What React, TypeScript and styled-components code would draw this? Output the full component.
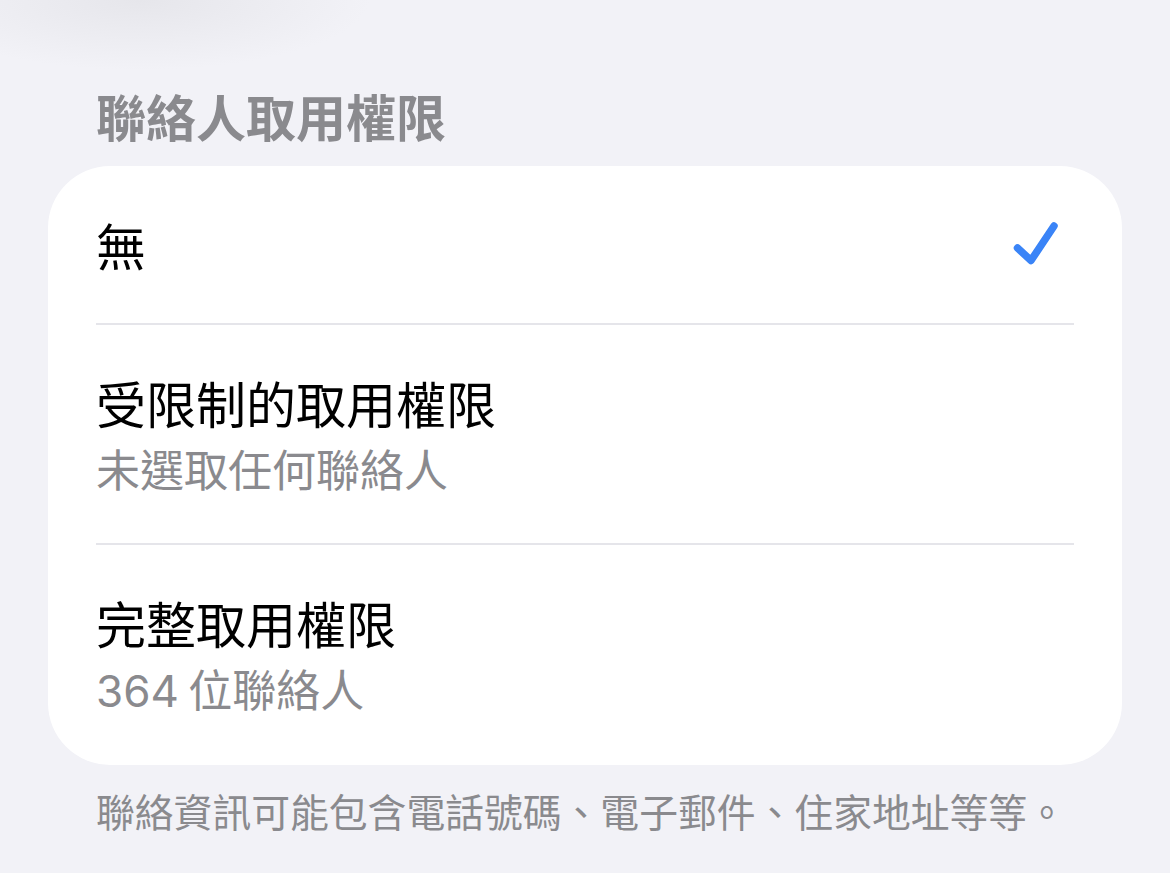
import React from "react";
import styled, { createGlobalStyle } from "styled-components";

const GlobalStyle = createGlobalStyle`
  html, body {
    margin: 0;
    padding: 0;
  }
  body {
    background-color: #f2f2f7;
    background-image: radial-gradient(ellipse 230px 70px at 140px 0px, #e6e6eb 0%, rgba(242, 242, 247, 0) 100%);
    background-repeat: no-repeat;
    font-family: "Noto Sans CJK TC", "Noto Sans", sans-serif;
    -webkit-font-smoothing: antialiased;
  }
`;

type Option = {
  title: string;
  subtitle?: string;
  selected?: boolean;
};

const options: Option[] = [
  { title: "無", selected: true },
  { title: "受限制的取用權限", subtitle: "未選取任何聯絡人" },
  { title: "完整取用權限", subtitle: "364 位聯絡人" },
];

const CheckIcon = () => (
  <Check viewBox="0 0 48 48" aria-hidden>
    <path
      d="M5.5 28 L19 40.5 L42 6"
      fill="none"
      stroke="#3a84f7"
      strokeWidth="7.5"
      strokeLinecap="round"
      strokeLinejoin="round"
    />
  </Check>
);

const App = () => {
  return (
    <>
      <GlobalStyle />
      <Page>
        <SectionHeader>聯絡人取用權限</SectionHeader>
        <Card>
          {options.map((opt, i) => (
            <React.Fragment key={opt.title}>
              {i > 0 && <Separator />}
              <Row $single={!opt.subtitle} $last={i === options.length - 1}>
                <Labels>
                  <Title>{opt.title}</Title>
                  {opt.subtitle && <Subtitle>{opt.subtitle}</Subtitle>}
                </Labels>
                {opt.selected && <CheckIcon />}
              </Row>
            </React.Fragment>
          ))}
        </Card>
        <Footer>聯絡資訊可能包含電話號碼、電子郵件、住家地址等等。</Footer>
      </Page>
    </>
  );
};

export default App;

const Page = styled.div`
  display: flex;
  flex-direction: column;
  padding: 85px 48px 0;
`;

const SectionHeader = styled.h2`
  margin: 0 0 21px;
  padding-left: 48px;
  font-size: 50px;
  line-height: 60px;
  font-weight: 600;
  color: #8a8a8e;
`;

const Card = styled.div`
  display: flex;
  flex-direction: column;
  background: #ffffff;
  border-radius: 62px;
  overflow: hidden;
`;

const Row = styled.div<{ $single: boolean; $last: boolean }>`
  display: flex;
  align-items: center;
  justify-content: space-between;
  padding: ${(p) => (p.$single ? "48px 62px 49px 48px" : p.$last ? "47px 62px 44px 48px" : "47px 62px 42px 48px")};
`;

const Labels = styled.div`
  display: flex;
  flex-direction: column;
  gap: 9px;
`;

const Title = styled.div`
  font-size: 50px;
  line-height: 60px;
  font-weight: 400;
  color: #000000;
`;

const Subtitle = styled.div`
  font-family: Inter, "Noto Sans CJK TC", sans-serif;
  font-size: 44px;
  line-height: 60px;
  font-weight: 400;
  word-spacing: -3px;
  color: #8a8a8e;
`;

const Separator = styled.div`
  height: 2px;
  margin: 0 48px;
  background: #e5e5ea;
`;

const Check = styled.svg`
  width: 48px;
  height: 48px;
  flex-shrink: 0;
`;

const Footer = styled.p`
  margin: 20px 0 0;
  padding-left: 48px;
  font-size: 38.8px;
  line-height: 50px;
  color: #8a8a8e;
`;
